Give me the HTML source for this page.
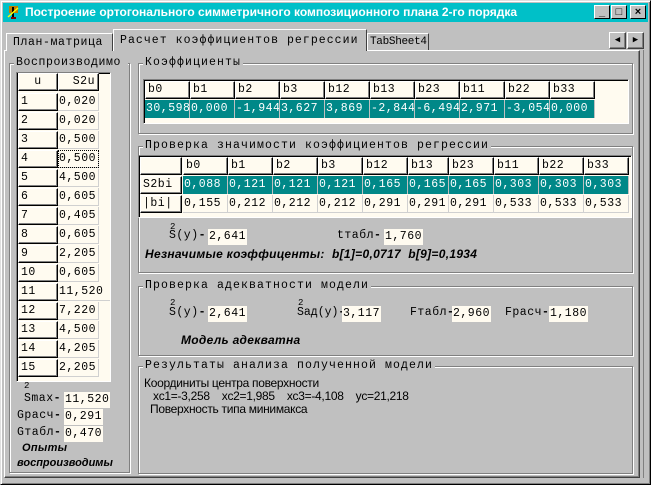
<!DOCTYPE html>
<html><head><meta charset="utf-8"><style>
*{margin:0;padding:0;box-sizing:border-box}
body{width:651px;height:485px;background:#c0c0c0;position:relative;overflow:hidden;font-family:"Liberation Mono","DejaVu Sans Mono",monospace;font-size:11.5px;color:#000}
.a{position:absolute;white-space:nowrap}
.win{left:0;top:0;width:651px;height:485px;border:1px solid;border-color:#dfdfdf #000 #000 #dfdfdf;box-shadow:inset 1px 1px #fff,inset -1px -1px #808080}
.title{left:3px;top:3px;width:645px;height:19px;background:#00c0c8;color:#fff;font:bold 12px "Liberation Sans",sans-serif;line-height:19px;padding-left:22px}
.tb{top:5px;width:16px;height:14px;background:#c0c0c0;border:1px solid;border-color:#fff #000 #000 #fff;font:bold 11px "Liberation Sans",sans-serif;text-align:center;line-height:12px;color:#000}
.raised{border:1px solid;border-color:#fff #404040 #404040 #fff;box-shadow:inset -1px -1px #808080}
.tab{border:1px solid;border-color:#fff #404040 transparent #fff;border-bottom:none;background:#c0c0c0;letter-spacing:.6px;padding-left:6px;line-height:17px;overflow:hidden}
.grp{border:1px solid #808080;box-shadow:1px 1px #fff, inset 1px 1px #fff}
.gt{background:#c0c0c0;padding:0 2px;letter-spacing:1.1px;line-height:13px}
.gridbox{background:#fffbf0;border:1px solid;border-color:#808080 #fff #fff #808080;box-shadow:inset 1px 1px #000}
.h{background:#fffbf0;border:1px solid;border-color:#fff #000 #000 #fff;box-shadow:inset -1px -1px #808080;padding-left:2px;line-height:15px;height:18px;letter-spacing:.5px;overflow:hidden}
.d{background:#008888;color:#fff;padding-left:1px;line-height:18px;height:18px;border-right:1px solid #c0c0c0;letter-spacing:.5px;overflow:hidden}
.c{background:#fffbf0;padding-left:1px;line-height:18px;height:18px;border-right:1px solid #d0d0d0;border-bottom:1px solid #d0d0d0;letter-spacing:.5px;overflow:hidden}
.v{background:#fffbf0;line-height:15px;height:16px;padding:0 1px;letter-spacing:.5px}
.l{letter-spacing:.5px}
.l b{font-weight:900}
.bi{font:italic bold 12px "Liberation Sans",sans-serif;letter-spacing:.3px}
.ss{font:12px "Liberation Sans",sans-serif;letter-spacing:-.3px}
</style></head><body>
<div class="a win"></div>
<div class="a title">Построение ортогонального симметричного композиционного плана 2-го порядка</div>
<div class="a" style="left:6px;top:5px;width:14px;height:15px;"><svg width="14" height="15"><rect x="3" y="1" width="9" height="7" fill="#c08000"/><line x1="7" y1="2" x2="7" y2="14" stroke="#000" stroke-width="2"/><line x1="2" y1="12" x2="12" y2="3" stroke="#ff0" stroke-width="1.5"/><rect x="5" y="12" width="5" height="2" fill="#800000"/></svg></div>
<div class="a tb" style="left:594px">_</div>
<div class="a tb" style="left:611px">□</div>
<div class="a tb" style="left:630px">×</div>

<div class="a" style="left:4px;top:50px;width:636px;height:428px;border:1px solid;border-color:#fff #404040 #404040 #fff;box-shadow:inset -1px -1px #808080"></div>
<div class="a" style="left:643px;top:50px;width:1px;height:428px;background:#808080"></div>
<div class="a tab" style="left:6px;top:33px;width:107px;height:18px">План-матрица</div>
<div class="a tab" style="left:113px;top:29px;width:254px;height:22px;line-height:21px;padding-left:6px;letter-spacing:1.05px">Расчет коэффициентов регрессии</div>
<div class="a tab" style="left:367px;top:33px;width:62px;height:17px;padding-left:2px;letter-spacing:-.3px;font-size:11px">TabSheet4</div>
<div class="a raised" style="left:609px;top:32px;width:17px;height:17px;font-size:9px;text-align:center;line-height:15px">◀</div>
<div class="a raised" style="left:627px;top:32px;width:17px;height:17px;font-size:9px;text-align:center;line-height:15px">▶</div>

<div class="a grp" style="left:9px;top:63px;width:121px;height:410px"></div>
<div class="a gt" style="left:14px;top:56px;width:114px;overflow:hidden;letter-spacing:.6px">Воспроизводимо</div>
<div class="a gridbox" style="left:16px;top:72px;width:95px;height:310px"></div>
<div class="a h" style="left:18px;top:73px;width:40px;text-align:center;padding:0">u</div>
<div class="a h" style="left:58px;top:73px;width:41px;text-align:right;padding-right:3px">S2u</div>
<div class="a h" style="left:18px;top:93px;width:40px">1</div><div class="a c" style="left:58px;top:93px;width:41px">0,020</div>
<div class="a h" style="left:18px;top:112px;width:40px">2</div><div class="a c" style="left:58px;top:112px;width:41px">0,020</div>
<div class="a h" style="left:18px;top:131px;width:40px">3</div><div class="a c" style="left:58px;top:131px;width:41px">0,500</div>
<div class="a h" style="left:18px;top:150px;width:40px">4</div><div class="a c" style="left:58px;top:150px;width:41px;outline:1px dotted #000;outline-offset:-1px">0,500</div>
<div class="a h" style="left:18px;top:169px;width:40px">5</div><div class="a c" style="left:58px;top:169px;width:41px">4,500</div>
<div class="a h" style="left:18px;top:188px;width:40px">6</div><div class="a c" style="left:58px;top:188px;width:41px">0,605</div>
<div class="a h" style="left:18px;top:207px;width:40px">7</div><div class="a c" style="left:58px;top:207px;width:41px">0,405</div>
<div class="a h" style="left:18px;top:226px;width:40px">8</div><div class="a c" style="left:58px;top:226px;width:41px">0,605</div>
<div class="a h" style="left:18px;top:245px;width:40px">9</div><div class="a c" style="left:58px;top:245px;width:41px">2,205</div>
<div class="a h" style="left:18px;top:264px;width:40px">10</div><div class="a c" style="left:58px;top:264px;width:41px">0,605</div>
<div class="a h" style="left:18px;top:283px;width:40px">11</div><div class="a c" style="left:58px;top:283px;width:52px;border-right:none">11,520</div>
<div class="a h" style="left:18px;top:302px;width:40px">12</div><div class="a c" style="left:58px;top:302px;width:41px">7,220</div>
<div class="a h" style="left:18px;top:321px;width:40px">13</div><div class="a c" style="left:58px;top:321px;width:41px">4,500</div>
<div class="a h" style="left:18px;top:340px;width:40px">14</div><div class="a c" style="left:58px;top:340px;width:41px">4,205</div>
<div class="a h" style="left:18px;top:359px;width:40px">15</div><div class="a c" style="left:58px;top:359px;width:41px">2,205</div>
<div class="a" style="left:24px;top:381px;font-size:9px">2</div>
<div class="a l" style="left:24px;top:392px">Smax<b>-</b></div><div class="a v" style="left:64px;top:392px">11,520</div>
<div class="a l" style="left:17px;top:409px">Gрасч<b>-</b></div><div class="a v" style="left:64px;top:409px">0,291</div>
<div class="a l" style="left:17px;top:426px">Gтабл<b>-</b></div><div class="a v" style="left:64px;top:426px">0,470</div>
<div class="a bi" style="left:22px;top:442px;font-size:11px">Опыты</div>
<div class="a bi" style="left:17px;top:457px;font-size:11px;letter-spacing:0">воспроизводимы</div>

<div class="a grp" style="left:138px;top:63px;width:495px;height:71px"></div>
<div class="a gt" style="left:143px;top:56px">Коэффициенты</div>
<div class="a gridbox" style="left:143px;top:79px;width:486px;height:45px"></div>
<div class="a h" style="left:145px;top:81px;width:45px">b0</div><div class="a h" style="left:190px;top:81px;width:45px">b1</div><div class="a h" style="left:235px;top:81px;width:45px">b2</div><div class="a h" style="left:280px;top:81px;width:45px">b3</div><div class="a h" style="left:325px;top:81px;width:45px">b12</div><div class="a h" style="left:370px;top:81px;width:45px">b13</div><div class="a h" style="left:415px;top:81px;width:45px">b23</div><div class="a h" style="left:460px;top:81px;width:45px">b11</div><div class="a h" style="left:505px;top:81px;width:45px">b22</div><div class="a h" style="left:550px;top:81px;width:45px">b33</div>
<div class="a d" style="left:145px;top:100px;width:45px">30,598</div><div class="a d" style="left:190px;top:100px;width:45px">0,000</div><div class="a d" style="left:235px;top:100px;width:45px">-1,944</div><div class="a d" style="left:280px;top:100px;width:45px">3,627</div><div class="a d" style="left:325px;top:100px;width:45px">3,869</div><div class="a d" style="left:370px;top:100px;width:45px">-2,844</div><div class="a d" style="left:415px;top:100px;width:45px">-6,494</div><div class="a d" style="left:460px;top:100px;width:45px">2,971</div><div class="a d" style="left:505px;top:100px;width:45px">-3,054</div><div class="a d" style="left:550px;top:100px;width:45px">0,000</div>

<div class="a grp" style="left:138px;top:146px;width:495px;height:127px"></div>
<div class="a gt" style="left:143px;top:139px">Проверка значимости коэффициентов регрессии</div>
<div class="a gridbox" style="left:138px;top:155px;width:494px;height:63px"></div>
<div class="a h" style="left:140px;top:157px;width:42px"></div>
<div class="a h" style="left:183px;top:157px;width:45px">b0</div><div class="a h" style="left:228px;top:157px;width:45px">b1</div><div class="a h" style="left:273px;top:157px;width:45px">b2</div><div class="a h" style="left:318px;top:157px;width:45px">b3</div><div class="a h" style="left:363px;top:157px;width:45px">b12</div><div class="a h" style="left:408px;top:157px;width:41px">b13</div><div class="a h" style="left:449px;top:157px;width:45px">b23</div><div class="a h" style="left:494px;top:157px;width:45px">b11</div><div class="a h" style="left:539px;top:157px;width:45px">b22</div><div class="a h" style="left:584px;top:157px;width:45px">b33</div>
<div class="a h" style="left:140px;top:176px;width:42px">S2bi</div>
<div class="a d" style="left:183px;top:176px;width:45px">0,088</div><div class="a d" style="left:228px;top:176px;width:45px">0,121</div><div class="a d" style="left:273px;top:176px;width:45px">0,121</div><div class="a d" style="left:318px;top:176px;width:45px">0,121</div><div class="a d" style="left:363px;top:176px;width:45px">0,165</div><div class="a d" style="left:408px;top:176px;width:41px">0,165</div><div class="a d" style="left:449px;top:176px;width:45px">0,165</div><div class="a d" style="left:494px;top:176px;width:45px">0,303</div><div class="a d" style="left:539px;top:176px;width:45px">0,303</div><div class="a d" style="left:584px;top:176px;width:45px">0,303</div>
<div class="a h" style="left:140px;top:195px;width:42px">|bi|</div>
<div class="a c" style="left:183px;top:195px;width:45px">0,155</div><div class="a c" style="left:228px;top:195px;width:45px">0,212</div><div class="a c" style="left:273px;top:195px;width:45px">0,212</div><div class="a c" style="left:318px;top:195px;width:45px">0,212</div><div class="a c" style="left:363px;top:195px;width:45px">0,291</div><div class="a c" style="left:408px;top:195px;width:41px">0,291</div><div class="a c" style="left:449px;top:195px;width:45px">0,291</div><div class="a c" style="left:494px;top:195px;width:45px">0,533</div><div class="a c" style="left:539px;top:195px;width:45px">0,533</div><div class="a c" style="left:584px;top:195px;width:45px">0,533</div>
<div class="a" style="left:170px;top:222px;font-size:9px">2</div>
<div class="a l" style="left:169px;top:229px">S(y)<b>-</b></div><div class="a v" style="left:208px;top:229px">2,641</div>
<div class="a l" style="left:337px;top:229px">tтабл<b>-</b></div><div class="a v" style="left:384px;top:229px">1,760</div>
<div class="a bi" style="left:145px;top:247px">Незначимые коэффиценты:&nbsp; b[1]=0,0717&nbsp; b[9]=0,1934</div>

<div class="a grp" style="left:138px;top:286px;width:495px;height:70px"></div>
<div class="a gt" style="left:143px;top:279px">Проверка адекватности модели</div>
<div class="a" style="left:170px;top:298px;font-size:9px">2</div>
<div class="a l" style="left:169px;top:306px">S(y)<b>-</b></div><div class="a v" style="left:208px;top:306px">2,641</div>
<div class="a" style="left:298px;top:298px;font-size:9px">2</div>
<div class="a l" style="left:297px;top:306px;letter-spacing:0">Sад(y)<b>-</b></div><div class="a v" style="left:342px;top:306px">3,117</div>
<div class="a l" style="left:410px;top:306px">Fтабл<b>-</b></div><div class="a v" style="left:452px;top:306px">2,960</div>
<div class="a l" style="left:505px;top:306px">Fрасч<b>-</b></div><div class="a v" style="left:549px;top:306px">1,180</div>
<div class="a bi" style="left:181px;top:333px">Модель адекватна</div>

<div class="a grp" style="left:138px;top:366px;width:495px;height:108px"></div>
<div class="a gt" style="left:143px;top:359px">Результаты анализа полученной модели</div>
<div class="a ss" style="left:144px;top:376px">Координиты центра поверхности</div>
<div class="a ss" style="left:153px;top:389px;word-spacing:3px">xc1=-3,258&nbsp; xc2=1,985&nbsp; xc3=-4,108&nbsp; yc=21,218</div>
<div class="a ss" style="left:150px;top:402px">Поверхность типа минимакса</div>
</body></html>
